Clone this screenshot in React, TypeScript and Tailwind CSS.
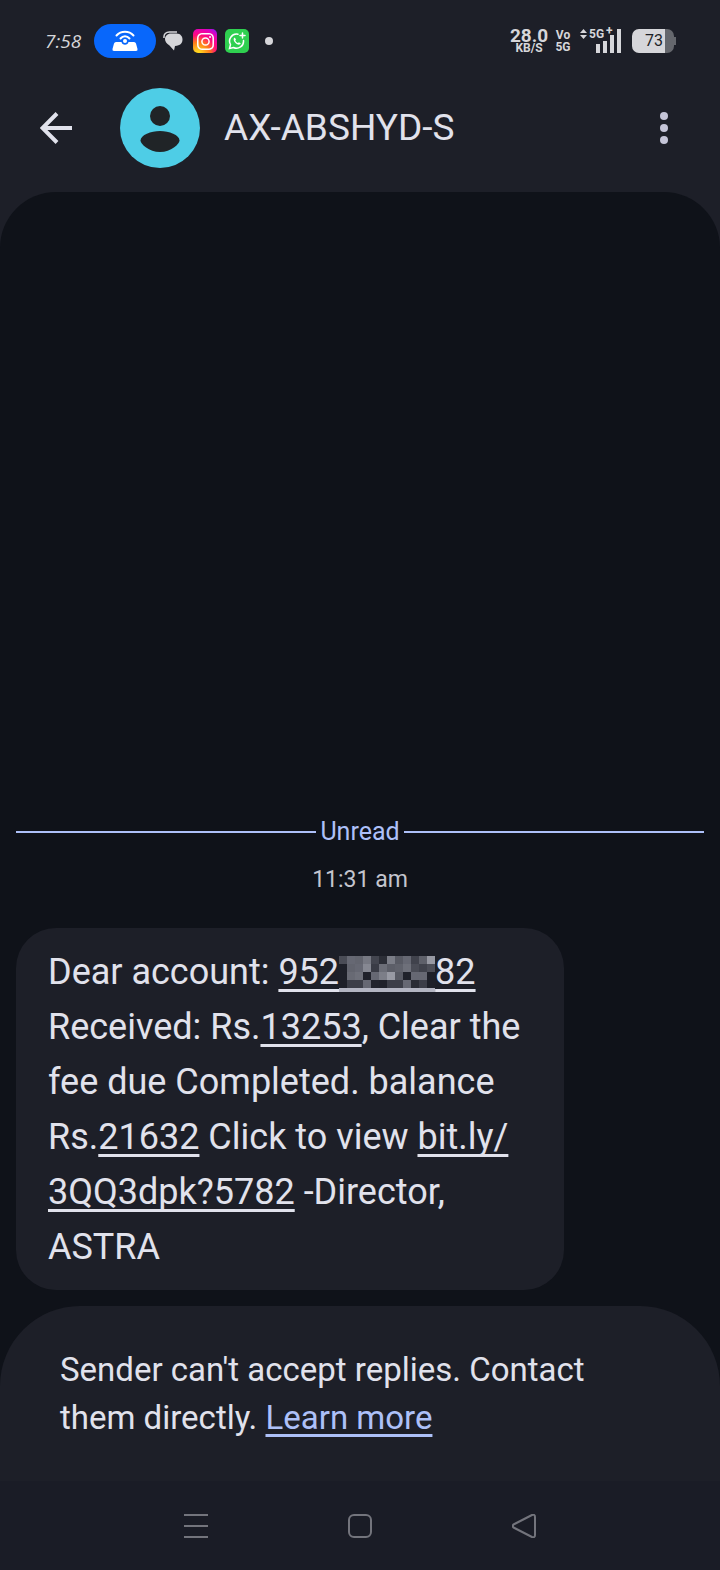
import { SiInstagram } from "react-icons/si";

const mosaic = [
  ["#4a4c56", "#666873", "#63656f", "#777983", "#43454f", "#2c2e37", "#7b7d87", "#585a64", "#666873", "#40424c", "#5e606a", "#9799a3"],
  ["#1e2029", "#62646e", "#666873", "#868892", "#3a3c46", "#6c6e78", "#5c5e68", "#60626c", "#6e707a", "#4a4c56", "#40424c", "#4c4e58"],
  ["#1e2029", "#686a74", "#6e707a", "#20222b", "#666873", "#7c7e88", "#989aa4", "#585a64", "#20222b", "#666873", "#666873", "#1e2029"],
  ["#1e2029", "#3c3e48", "#3c3e48", "#666873", "#22242d", "#20222b", "#3c3e48", "#3c3e48", "#666873", "#2a2c35", "#3c3e48", "#1e2029"],
];

const underlined = "underline decoration-[3px] underline-offset-[5px] [text-decoration-skip-ink:none]";

function Mosaic() {
  return (
    <svg width="96" height="40" viewBox="0 0 96 40" shapeRendering="crispEdges" className="inline-block align-[-12px]" aria-label="hidden digits">
      {mosaic.map((row, y) =>
        row.map((fill, x) => <rect key={`${x}-${y}`} x={x * 8} y={y * 8} width="8" height="8" fill={fill} />)
      )}
      <rect y="32" width="96" height="4" fill="#b3b5c2" />
    </svg>
  );
}

function StatusBar() {
  return (
    <div className="flex h-[82px] items-center justify-between pl-[45px] pr-[44px] text-[#d6d6da]">
      <div className="flex items-center">
        <span className="w-[49px] font-['Open_Sans',sans-serif] text-[19px] italic">7:58</span>
        <span className="flex h-[34px] w-[62px] items-center justify-center rounded-full bg-[#0867fb]">
          <svg width="28" height="22" viewBox="0 0 28 22">
            <path d="M5.500 5.500C10 .5 18 .5 22.500 5.500M9.500 8.500C12 5.500 16 5.500 18.500 8.500" fill="none" stroke="#fff" strokeWidth="2" strokeLinecap="round" />
            <path d="M5 12H10.500A3.600 3.600 0 0 0 17.500 12H23Q24.500 12 25 13.500L26.500 19Q27 21 25 21H3Q1 21 1.500 19L3 13.500Q3.500 12 5 12Z" fill="#fff" />
            <circle cx="14" cy="11" r="2" fill="#fff" />
          </svg>
        </span>
        <svg width="20" height="20" viewBox="0 0 20 20" className="ml-[7px]">
          <path d="M1 7C.5 3 3 1 6.500 1H14" fill="none" stroke="#d6d6da" strokeWidth="1.500" />
          <path d="M8 2.500H13.500C17.500 2.500 19.500 5.500 19.500 8.500C19.500 12 17.500 14.500 12 15L11 19.500L6.500 14.500C3.500 12.500 2 10.500 2 8C2 5 4.500 2.500 8 2.500Z" fill="#d6d6da" />
        </svg>
        <span className="ml-[10px] flex size-6 items-center justify-center rounded-[5px] bg-[radial-gradient(circle_at_20%_105%,#ffd21f_10%,#ff7a1a_38%,#ff0a7c_60%,#e600b8_80%,#7a1cff_100%)]">
          <SiInstagram size={17} color="#fff" />
        </span>
        <span className="ml-2 flex size-6 items-center justify-center rounded-[5px] bg-[#2fd050]">
          <svg width="18" height="18" viewBox="0 0 18 18" fill="none" stroke="#fff" strokeWidth="1.500" strokeLinecap="round">
            <path d="M10 2.200A7 7 0 0 0 2.500 12.500L1.500 16.500L5.500 15.500A7 7 0 0 0 15.500 8.500M14.500 1V6M12 3.500H17" />
            <path d="M6.500 5.500C5 6.500 5.500 9 7.500 11C9.500 13 12 13.200 12.800 11.500L11 10.200L9.800 11C8.500 10.300 7.700 9.400 7.300 8.400L8 7.300Z" fill="#fff" stroke="none" />
          </svg>
        </span>
        <span className="ml-4 size-2 rounded-full bg-[#d6d6da]" />
      </div>

      <div className="flex items-center">
        <div className="w-[40px] text-center font-bold">
          <div className="text-[19px] leading-[15px]">28.0</div>
          <div className="text-[12px] leading-[11px]">KB/S</div>
        </div>
        <div className="ml-[6px] w-[16px] text-center text-[12px] leading-[12px] font-bold">
          <div>Vo</div>
          <div>5G</div>
        </div>
        <div className="relative ml-2 h-[26px] w-[43px]">
          <svg width="43" height="26" viewBox="0 0 43 26" fill="#d6d6da">
            <path d="M1 5L4.500 1L8 5ZM1 7L4.500 11L8 7Z" />
            <rect x="17" y="16" width="4" height="9" />
            <rect x="24" y="13" width="4" height="12" />
            <rect x="31" y="7" width="4" height="18" />
            <rect x="38" y="1" width="4" height="24" />
          </svg>
          <span className="absolute top-[-1px] left-[10px] text-[12px] leading-[14px] font-bold">5G</span>
          <span className="absolute top-[-3px] left-[27px] text-[12px] leading-[12px] font-bold">+</span>
        </div>
        <div className="ml-[10px] flex items-center">
          <div className="flex h-6 w-[42px] items-center rounded-[7px] bg-[linear-gradient(90deg,#d6d6da_78%,#65676d_78%)] pl-[13px] text-[16px] text-[#1d1f28]">73</div>
          <span className="h-2 w-[2px] bg-[#65676d]" />
        </div>
      </div>
    </div>
  );
}

function TopBar() {
  return (
    <header className="flex items-center px-10 pt-[6px] pb-6">
      <button aria-label="Back">
        <svg width="32" height="32" viewBox="0 0 32 32" fill="none" stroke="#e1e2ec" strokeWidth="4">
          <path d="M32 16H3M17 1.500L2.500 16L17 30.500" />
        </svg>
      </button>
      <svg width="80" height="80" viewBox="0 0 80 80" className="ml-12">
        <circle cx="40" cy="40" r="40" fill="#4ecde6" />
        <g fill="#202427">
          <circle cx="40" cy="28" r="10" />
          <path d="M40 43C49 43 59.500 47 59.500 52.500C59.500 56 51 64 40 64S20.500 56 20.500 52.500C20.500 47 31 43 40 43Z" />
        </g>
      </svg>
      <h1 className="ml-6 flex-1 text-[37px] leading-[48px] text-[#e1e2ec]">AX-ABSHYD-S</h1>
      <button aria-label="More options" className="mr-3">
        <svg width="8" height="32" viewBox="0 0 8 32" fill="#c5c5d8">
          <circle cx="4" cy="4" r="4" />
          <circle cx="4" cy="16" r="4" />
          <circle cx="4" cy="28" r="4" />
        </svg>
      </button>
    </header>
  );
}

function Message() {
  return (
    <p className="mt-8 mr-auto ml-4 rounded-[40px] bg-[#1d1f28] pt-[17px] pr-11 pb-[15px] pl-8 text-[36px] leading-[55px] text-[#e1e2ec]">
      Dear account: <a href="#account" className="inline-block"><span className={underlined}>952</span><Mosaic /><span className={underlined}>82</span></a>
      <br />
      Received: Rs.<a href="#received" className={underlined}>13253</a>, Clear the
      <br />
      fee due Completed. balance
      <br />
      Rs.<a href="#balance" className={underlined}>21632</a> Click to view{" "}
      <a href="#link" className={underlined}>bit.ly/<br />3QQ3dpk?5782</a> -Director,
      <br />
      ASTRA
    </p>
  );
}

function NavBar() {
  return (
    <nav className="flex h-[89px] items-center justify-center gap-[140px] bg-[#1a1c26] text-[#73747c]">
      <button aria-label="Recent apps">
        <svg width="24" height="24" viewBox="0 0 24 24" stroke="currentColor" strokeWidth="2">
          <path d="M0 1H24M0 12H24M0 23H24" />
        </svg>
      </button>
      <button aria-label="Home">
        <svg width="24" height="24" viewBox="0 0 24 24" fill="none" stroke="currentColor" strokeWidth="2">
          <rect x="1" y="1" width="22" height="22" rx="5" />
        </svg>
      </button>
      <button aria-label="Go back">
        <svg width="24" height="24" viewBox="0 0 24 24" fill="none" stroke="currentColor" strokeWidth="2" strokeLinejoin="round">
          <path d="M1.500 10.500L20 1Q23 0 23 3V21Q23 24 20 23L1.500 13.500Q0 12 1.500 10.500Z" />
        </svg>
      </button>
    </nav>
  );
}

export default function App() {
  return (
    <div className="flex min-h-screen flex-col bg-[#1d1f28] font-['Roboto',sans-serif]">
      <StatusBar />
      <TopBar />
      <main className="flex flex-1 flex-col justify-end rounded-t-[56px] bg-[#0f1219] pb-4">
        <div className="flex items-center gap-1 px-4 text-[25px] leading-[32px] text-[#adc0f8]">
          <span className="h-[2px] flex-1 bg-[#adc0f8]" />
          Unread
          <span className="h-[2px] flex-1 bg-[#adc0f8]" />
        </div>
        <time className="mt-4 text-center text-[23px] leading-[32px] text-[#c4c5ce]">11:31 am</time>
        <Message />
      </main>
      <div className="bg-[#0f1219]">
        <footer className="rounded-t-[80px] bg-[#1d1f28] px-[60px] pt-10 pb-[39px] text-[33px] leading-[48px] text-[#e1e2ec]">
          Sender can't accept replies. Contact
          <br />
          them directly.{" "}
          <a href="#learn-more" className="text-[#adc0f8] underline decoration-[3px] underline-offset-[5px]">Learn more</a>
        </footer>
      </div>
      <NavBar />
    </div>
  );
}
